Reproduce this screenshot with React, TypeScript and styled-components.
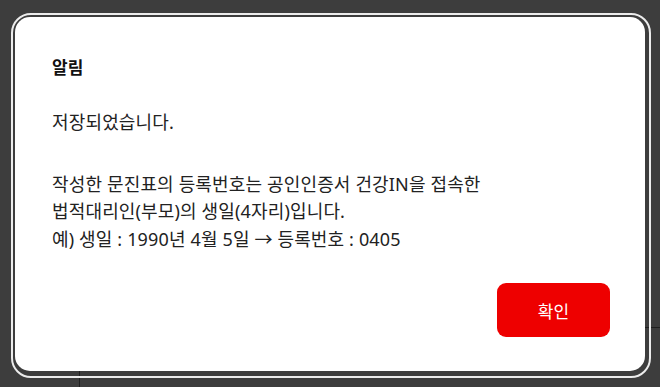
import React from 'react'
import styled, { createGlobalStyle } from 'styled-components'

const GlobalStyle = createGlobalStyle`
  html, body {
    margin: 0;
    padding: 0;
    background: #3d3d3d;
    font-family: 'Noto Sans', 'Noto Sans CJK KR', sans-serif;
  }
`

const Page = styled.div`
  width: 100vw;
  height: 100vh;
  overflow: hidden;
  background: #3d3d3d;
`

const BehindPanel = styled.div`
  margin: 327px 0 0 79px;
  height: 100px;
  border-top: 1px solid #1f1f1f;
  border-left: 1px solid #1f1f1f;
`

const Overlay = styled.div`
  position: fixed;
  inset: 0;
  padding: 13px 9px 0 11px;
`

const Frame = styled.div`
  width: 640px;
  box-sizing: border-box;
  border: 2px solid #ececec;
  border-radius: 20px;
  padding: 2px 4px 5px 2px;
`

const Card = styled.div`
  background: #fff;
  border-radius: 15px;
  padding: 37px 35px 34px 37px;
  display: flex;
  flex-direction: column;
`

const Title = styled.h2`
  margin: 0;
  font-size: 17px;
  line-height: 27px;
  font-weight: 700;
  color: #111;
`

const Text = styled.p<{ $gap: number }>`
  margin: ${p => p.$gap}px 0 0;
  font-size: 18px;
  line-height: 27.5px;
  letter-spacing: 0.15px;
  color: #222;
`

const Actions = styled.div`
  display: flex;
  justify-content: flex-end;
  margin-top: 30px;
`

const ConfirmButton = styled.button`
  width: 113px;
  height: 54px;
  border: none;
  border-radius: 9px;
  background: #ee0000;
  color: #fff;
  font-family: inherit;
  font-size: 17px;
  cursor: pointer;
`

export default function App() {
  return (
    <Page>
      <GlobalStyle />
      <BehindPanel />
      <Overlay>
        <Frame>
          <Card>
            <Title>알림</Title>
            <Text $gap={28}>저장되었습니다.</Text>
            <Text $gap={34}>
              작성한 문진표의 등록번호는 공인인증서 건강IN을 접속한
              <br />
              법적대리인(부모)의 생일(4자리)입니다.
              <br />
              예) 생일 : 1990년 4월 5일 → 등록번호 : 0405
            </Text>
            <Actions>
              <ConfirmButton>확인</ConfirmButton>
            </Actions>
          </Card>
        </Frame>
      </Overlay>
    </Page>
  )
}
